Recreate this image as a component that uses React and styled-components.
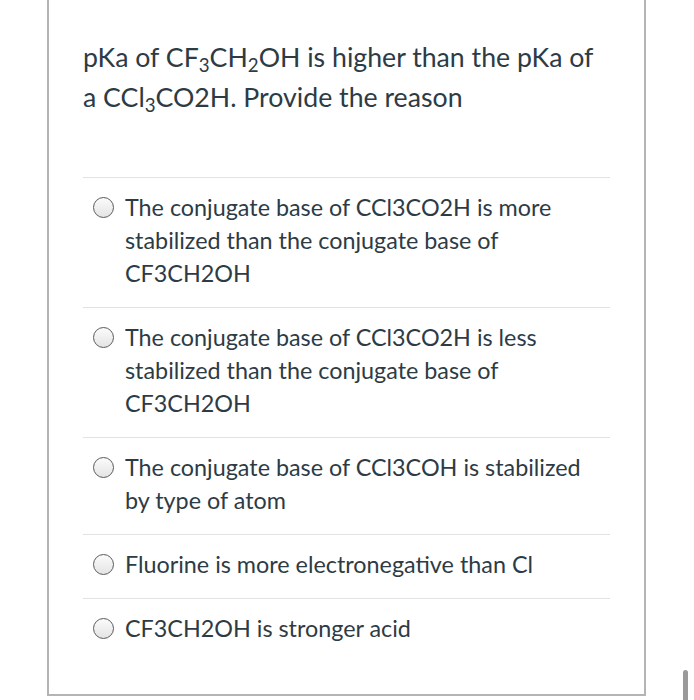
import React from "react";
import styled, { createGlobalStyle } from "styled-components";

const GlobalStyle = createGlobalStyle`
  html, body {
    margin: 0;
    padding: 0;
    background: #fff;
    font-family: Lato, "Open Sans", sans-serif;
    color: #2d3b45;
  }
`;

const Page = styled.div`
  width: 694px;
  height: 700px;
  overflow: hidden;
  position: relative;
`;

const Card = styled.div`
  margin-left: 47px;
  width: 599px;
  height: 696px;
  border: 2px solid #b4b4b4;
  border-top: none;
  padding: 0 34px;
  box-sizing: border-box;
`;

const Question = styled.div`
  padding-top: 37px;
  padding-bottom: 60px;
  border-bottom: 1px solid #e2e2e2;
`;

const QuestionText = styled.p`
  margin: 0;
  max-width: 520px;
  font-size: 26.7px;
  line-height: 40px;
`;

const AnswerList = styled.div`
  display: flex;
  flex-direction: column;
`;

const Answer = styled.label`
  display: flex;
  align-items: flex-start;
  gap: 11px;
  padding: 13px 4px 17px 10px;
  font-size: 23.35px;
  line-height: 33px;
  border-bottom: ${(p) => (p.last ? "none" : "1px solid #e2e2e2")};
`;

const Radio = styled.span`
  flex: none;
  width: 19px;
  height: 19px;
  margin-top: 6px;
  border-radius: 50%;
  border: 1.5px solid #5a5a5a;
  background: linear-gradient(180deg, #fbfbfb 0%, #e4e4e4 100%);
`;

const Sub = styled.sub`
  font-size: 0.7em;
  vertical-align: -0.25em;
  line-height: 0;
`;

const ScrollThumb = styled.div`
  position: absolute;
  left: 683px;
  top: 670px;
  width: 5px;
  height: 40px;
  border-radius: 3px;
  background: #9a9a9a;
`;

const answers = [
  "The conjugate base of CCl3CO2H is more stabilized than the conjugate base of CF3CH2OH",
  "The conjugate base of CCl3CO2H is less stabilized than the conjugate base of CF3CH2OH",
  "The conjugate base of CCl3COH is stabilized by type of atom",
  "Fluorine is more electronegative than Cl",
  "CF3CH2OH is stronger acid",
];

export default function App() {
  return (
    <Page>
      <GlobalStyle />
      <Card>
        <Question>
          <QuestionText>
            pKa of CF<Sub>3</Sub>CH<Sub>2</Sub>OH is higher than the pKa of a
            CCl<Sub>3</Sub>CO2H. Provide the reason
          </QuestionText>
        </Question>
        <AnswerList>
          {answers.map((a, i) => (
            <Answer key={i} last={i === answers.length - 1}>
              <Radio />
              <span>{a}</span>
            </Answer>
          ))}
        </AnswerList>
      </Card>
      <ScrollThumb />
    </Page>
  );
}
